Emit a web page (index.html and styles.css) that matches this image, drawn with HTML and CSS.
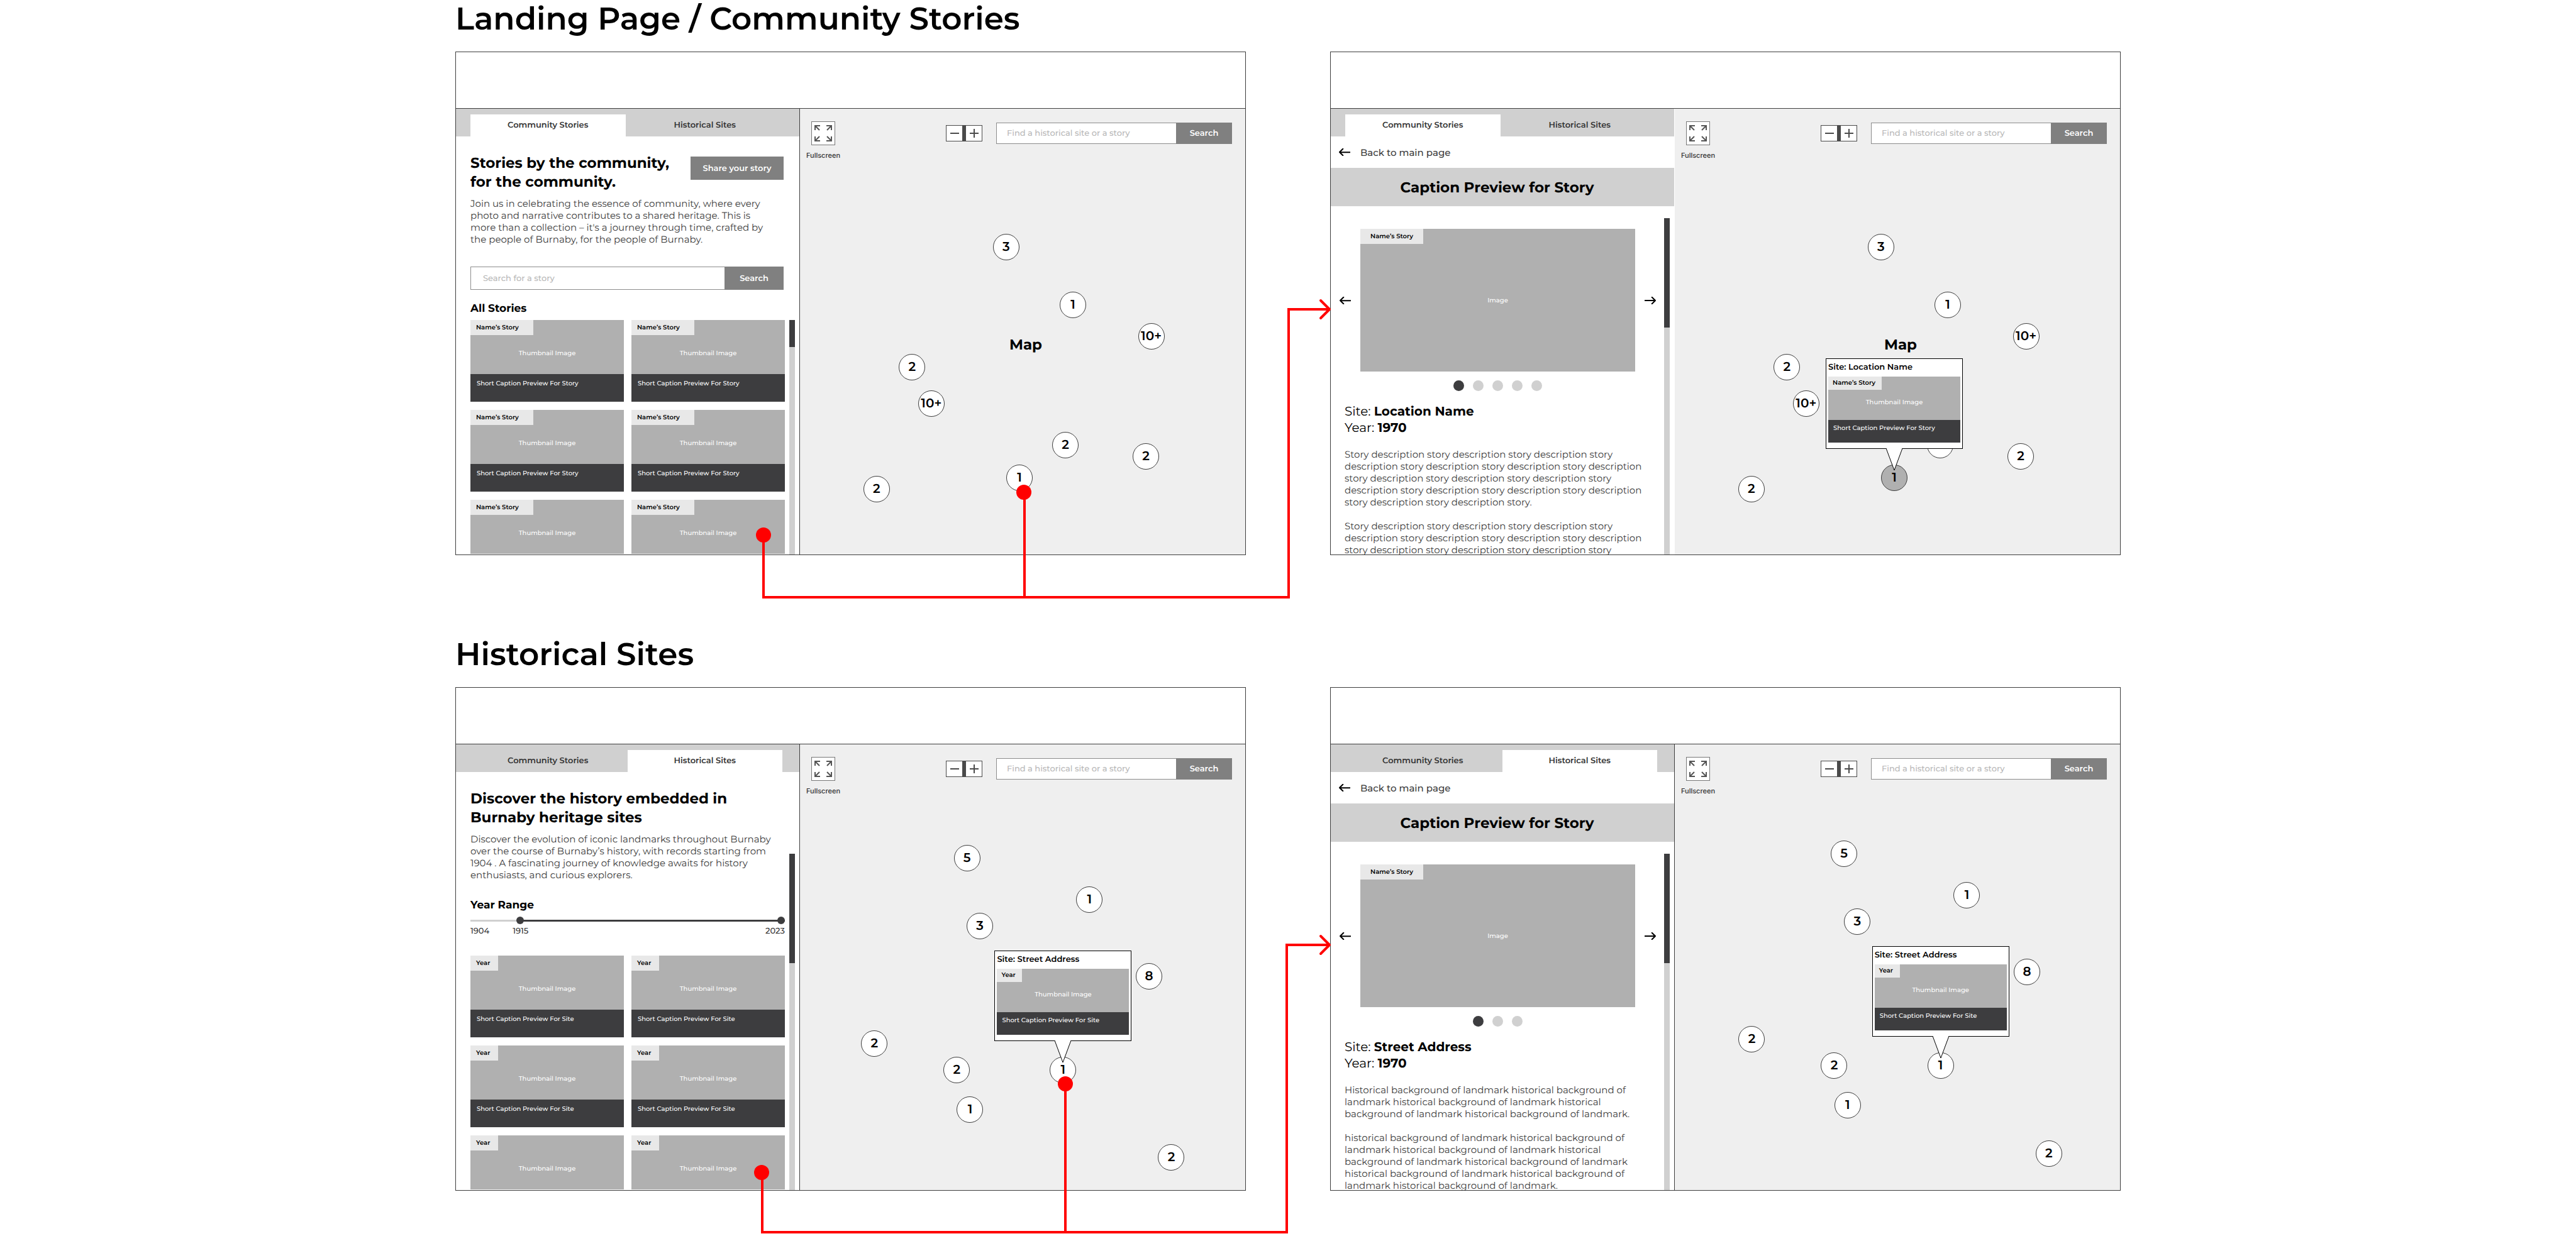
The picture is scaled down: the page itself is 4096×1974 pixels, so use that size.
FILE: index.html
```html
<!DOCTYPE html>
<html lang="en">
<head>
<meta charset="utf-8">
<meta name="viewport" content="width=device-width, initial-scale=1">
<title>Burnaby Heritage – Wireframes</title>
<link rel="stylesheet" href="styles.css">
</head>
<body>
<svg class="symbols" aria-hidden="true">
  <symbol id="arrow-left" viewBox="0 0 18 12"><path d="M17.500 6.200 L1 6 M6.300 0.800 L1 6 L6.300 11.200"/></symbol>
  <symbol id="arrow-right" viewBox="0 0 18 12"><path d="M0.500 6 H17 M11.700 0.800 L17 6 L11.700 11.200"/></symbol>
  <symbol id="expand" viewBox="0 0 36 36"><path d="M5 13 V6 H13 M5.500 6.500 L12 13 M23 6 H31 V13 M30.500 6.500 L24 13 M5 23 V30 H13 M5.500 29.500 L12 23 M23 30 H31 V23 M30.500 29.500 L24 23"/></symbol>
</svg>
<main class="board">

  <section class="flow">
    <h1 class="flow-title">Landing Page / Community Stories</h1>
    <div class="screens">

      <article class="screen">
        <header class="screen-header"></header>
        <div class="screen-main">
          <div class="panel">
            <nav class="tabs">
              <button class="tab tab-active" type="button">Community Stories</button>
              <button class="tab" type="button">Historical Sites</button>
            </nav>
            <div class="panel-body">
              <div class="listing">
                <div class="intro">
                  <h2 class="heading">Stories by the community,<br>for the community.</h2>
                  <button class="button share" type="button">Share your story</button>
                </div>
                <p class="text">Join us in celebrating the essence of community, where every photo and narrative contributes to a shared heritage. This is more than a collection – it's a journey through time, crafted by the people of Burnaby, for the people of Burnaby.</p>
                <form class="search story-search">
                  <input class="search-input" type="search" placeholder="Search for a story" aria-label="Search for a story">
                  <button class="button" type="button">Search</button>
                </form>
                <h3 class="subheading">All Stories</h3>
                <ul class="cards story-cards">
                  <li class="card"><div class="thumb"><span class="badge">Name’s Story</span><span class="thumb-label">Thumbnail Image</span></div><p class="caption">Short Caption Preview For Story</p></li>
                  <li class="card"><div class="thumb"><span class="badge">Name’s Story</span><span class="thumb-label">Thumbnail Image</span></div><p class="caption">Short Caption Preview For Story</p></li>
                  <li class="card"><div class="thumb"><span class="badge">Name’s Story</span><span class="thumb-label">Thumbnail Image</span></div><p class="caption">Short Caption Preview For Story</p></li>
                  <li class="card"><div class="thumb"><span class="badge">Name’s Story</span><span class="thumb-label">Thumbnail Image</span></div><p class="caption">Short Caption Preview For Story</p></li>
                  <li class="card"><div class="thumb"><span class="badge">Name’s Story</span><span class="thumb-label">Thumbnail Image</span></div></li>
                  <li class="card"><div class="thumb"><span class="badge">Name’s Story</span><span class="thumb-label">Thumbnail Image</span></div></li>
                </ul>
              </div>
              <div class="scrollbar scrollbar-stories"><div class="scroll-thumb"></div></div>
            </div>
          </div>
          <div class="map">
            <div class="map-tools">
              <div class="fullscreen">
                <button class="fullscreen-button" type="button" aria-labelledby="fs-1"><svg class="icon-expand"><use href="#expand"/></svg></button>
                <span class="fullscreen-label" id="fs-1">Fullscreen</span>
              </div>
              <div class="zoom">
                <button class="zoom-button" type="button" aria-label="Zoom out"><svg class="icon-zoom" viewBox="0 0 14 14"><path d="M0 7 H14"/></svg></button>
                <button class="zoom-button" type="button" aria-label="Zoom in"><svg class="icon-zoom" viewBox="0 0 14 14"><path d="M0 7 H14 M7 0 V14"/></svg></button>
              </div>
              <form class="search map-search">
                <input class="search-input" type="search" placeholder="Find a historical site or a story" aria-label="Find a historical site or a story">
                <button class="button" type="button">Search</button>
              </form>
            </div>
            <p class="map-name" style="left:50.7%;top:52.9%">Map</p>
            <button class="pin" type="button" style="left:46.3%;top:31%">3</button>
            <button class="pin" type="button" style="left:61.3%;top:44%">1</button>
            <button class="pin" type="button" style="left:78.9%;top:51.1%">10+</button>
            <button class="pin" type="button" style="left:25.2%;top:58%">2</button>
            <button class="pin" type="button" style="left:29.5%;top:66.2%">10+</button>
            <button class="pin" type="button" style="left:59.6%;top:75.4%">2</button>
            <button class="pin" type="button" style="left:77.7%;top:78%">2</button>
            <button class="pin" type="button" style="left:49.3%;top:82.8%">1</button>
            <button class="pin" type="button" style="left:17.2%;top:85.3%">2</button>
          </div>
        </div>
      </article>

      <article class="screen screen-story">
        <header class="screen-header"></header>
        <div class="screen-main">
          <div class="panel">
            <nav class="tabs">
              <button class="tab tab-active" type="button">Community Stories</button>
              <button class="tab" type="button">Historical Sites</button>
            </nav>
            <a class="back" href="#"><svg class="icon-arrow"><use href="#arrow-left"/></svg>Back to main page</a>
            <h2 class="banner">Caption Preview for Story</h2>
            <div class="panel-body">
              <div class="detail">
                <div class="carousel">
                  <button class="arrow" type="button" aria-label="Previous image"><svg class="icon-arrow"><use href="#arrow-left"/></svg></button>
                  <div class="slide"><span class="badge">Name’s Story</span>Image</div>
                  <button class="arrow" type="button" aria-label="Next image"><svg class="icon-arrow"><use href="#arrow-right"/></svg></button>
                </div>
                <div class="dots"><i class="dot dot-active"></i><i class="dot"></i><i class="dot"></i><i class="dot"></i><i class="dot"></i></div>
                <div class="facts">
                  <p class="fact">Site: <strong>Location Name</strong></p>
                  <p class="fact">Year: <strong>1970</strong></p>
                </div>
                <div class="story">
                  <p class="text">Story description story description story description story description story description story description story description story description story description story description story description story description story description story description story description story description story.</p>
                  <p class="text">Story description story description story description story description story description story description story description story description story description story description story</p>
                </div>
              </div>
              <div class="scrollbar"><div class="scroll-thumb"></div></div>
            </div>
          </div>
          <div class="map">
            <div class="map-tools">
              <div class="fullscreen">
                <button class="fullscreen-button" type="button" aria-labelledby="fs-2"><svg class="icon-expand"><use href="#expand"/></svg></button>
                <span class="fullscreen-label" id="fs-2">Fullscreen</span>
              </div>
              <div class="zoom">
                <button class="zoom-button" type="button" aria-label="Zoom out"><svg class="icon-zoom" viewBox="0 0 14 14"><path d="M0 7 H14"/></svg></button>
                <button class="zoom-button" type="button" aria-label="Zoom in"><svg class="icon-zoom" viewBox="0 0 14 14"><path d="M0 7 H14 M7 0 V14"/></svg></button>
              </div>
              <form class="search map-search">
                <input class="search-input" type="search" placeholder="Find a historical site or a story" aria-label="Find a historical site or a story">
                <button class="button" type="button">Search</button>
              </form>
            </div>
            <p class="map-name" style="left:50.7%;top:52.9%">Map</p>
            <button class="pin" type="button" style="left:46.3%;top:31%">3</button>
            <button class="pin" type="button" style="left:61.3%;top:44%">1</button>
            <button class="pin" type="button" style="left:78.9%;top:51.1%">10+</button>
            <button class="pin" type="button" style="left:25.2%;top:58%">2</button>
            <button class="pin" type="button" style="left:29.5%;top:66.2%">10+</button>
            <button class="pin" type="button" style="left:59.6%;top:75.4%">2</button>
            <button class="pin" type="button" style="left:77.7%;top:78%">2</button>
            <button class="pin pin-active" type="button" style="left:49.3%;top:82.8%">1</button>
            <button class="pin" type="button" style="left:17.2%;top:85.3%">2</button>
            <div class="popup" style="left:49.3%;top:82.8%">
              <h3 class="popup-title">Site: Location Name</h3>
              <div class="card card-small"><div class="thumb"><span class="badge">Name’s Story</span><span class="thumb-label">Thumbnail Image</span></div><p class="caption">Short Caption Preview For Story</p></div>
              <svg class="popup-tail" viewBox="0 0 28 36"><path d="M1 0 L14 35 L27 0"/></svg>
            </div>
          </div>
        </div>
      </article>
    </div>
    <svg class="connector" viewBox="0 0 2648 963" preserveAspectRatio="none" aria-hidden="true">
      <path d="M490 851 V950 H1325 V492 H1390 M905 783 V950"/>
      <path class="connector-head" d="M1376 478 L1390 492 L1376 506"/>
      <circle cx="490" cy="851" r="12"/>
      <circle cx="904" cy="783" r="12"/>
    </svg>
  </section>

  <section class="flow">
    <h1 class="flow-title">Historical Sites</h1>
    <div class="screens">

      <article class="screen">
        <header class="screen-header"></header>
        <div class="screen-main">
          <div class="panel">
            <nav class="tabs">
              <button class="tab" type="button">Community Stories</button>
              <button class="tab tab-active" type="button">Historical Sites</button>
            </nav>
            <div class="panel-body">
              <div class="listing">
                <h2 class="heading">Discover the history embedded in<br>Burnaby heritage sites</h2>
                <p class="text">Discover the evolution of iconic landmarks throughout Burnaby over the course of Burnaby’s history, with records starting from 1904 . A fascinating journey of knowledge awaits for history enthusiasts, and curious explorers.</p>
                <fieldset class="years">
                  <legend class="subheading">Year Range</legend>
                  <div class="range">
                    <input class="range-input" type="range" min="0" max="100" value="15" aria-label="First year" aria-valuetext="1915">
                    <input class="range-input" type="range" min="0" max="100" value="100" aria-label="Last year" aria-valuetext="2023">
                  </div>
                  <div class="range-labels"><span>1904</span><span>1915</span><span class="range-end">2023</span></div>
                </fieldset>
                <ul class="cards site-cards">
                  <li class="card"><div class="thumb"><span class="badge badge-year">Year</span><span class="thumb-label">Thumbnail Image</span></div><p class="caption">Short Caption Preview For Site</p></li>
                  <li class="card"><div class="thumb"><span class="badge badge-year">Year</span><span class="thumb-label">Thumbnail Image</span></div><p class="caption">Short Caption Preview For Site</p></li>
                  <li class="card"><div class="thumb"><span class="badge badge-year">Year</span><span class="thumb-label">Thumbnail Image</span></div><p class="caption">Short Caption Preview For Site</p></li>
                  <li class="card"><div class="thumb"><span class="badge badge-year">Year</span><span class="thumb-label">Thumbnail Image</span></div><p class="caption">Short Caption Preview For Site</p></li>
                  <li class="card"><div class="thumb"><span class="badge badge-year">Year</span><span class="thumb-label">Thumbnail Image</span></div></li>
                  <li class="card"><div class="thumb"><span class="badge badge-year">Year</span><span class="thumb-label">Thumbnail Image</span></div></li>
                </ul>
              </div>
              <div class="scrollbar scrollbar-sites"><div class="scroll-thumb"></div></div>
            </div>
          </div>
          <div class="map">
            <div class="map-tools">
              <div class="fullscreen">
                <button class="fullscreen-button" type="button" aria-labelledby="fs-3"><svg class="icon-expand"><use href="#expand"/></svg></button>
                <span class="fullscreen-label" id="fs-3">Fullscreen</span>
              </div>
              <div class="zoom">
                <button class="zoom-button" type="button" aria-label="Zoom out"><svg class="icon-zoom" viewBox="0 0 14 14"><path d="M0 7 H14"/></svg></button>
                <button class="zoom-button" type="button" aria-label="Zoom in"><svg class="icon-zoom" viewBox="0 0 14 14"><path d="M0 7 H14 M7 0 V14"/></svg></button>
              </div>
              <form class="search map-search">
                <input class="search-input" type="search" placeholder="Find a historical site or a story" aria-label="Find a historical site or a story">
                <button class="button" type="button">Search</button>
              </form>
            </div>
            <button class="pin" type="button" style="left:37.5%;top:25.5%">5</button>
            <button class="pin" type="button" style="left:65%;top:34.9%">1</button>
            <button class="pin" type="button" style="left:40.4%;top:40.7%">3</button>
            <button class="pin" type="button" style="left:78.4%;top:52%">8</button>
            <button class="pin" type="button" style="left:16.7%;top:67.1%">2</button>
            <button class="pin" type="button" style="left:35.2%;top:73.1%">2</button>
            <button class="pin" type="button" style="left:38.2%;top:81.9%">1</button>
            <button class="pin" type="button" style="left:59.1%;top:73.1%">1</button>
            <button class="pin" type="button" style="left:83.4%;top:92.7%">2</button>
            <div class="popup" style="left:59.1%;top:73.1%">
              <h3 class="popup-title">Site: Street Address</h3>
              <div class="card card-small"><div class="thumb"><span class="badge badge-year">Year</span><span class="thumb-label">Thumbnail Image</span></div><p class="caption">Short Caption Preview For Site</p></div>
              <svg class="popup-tail" viewBox="0 0 28 36"><path d="M1 0 L14 35 L27 0"/></svg>
            </div>
          </div>
        </div>
      </article>

      <article class="screen">
        <header class="screen-header"></header>
        <div class="screen-main">
          <div class="panel">
            <nav class="tabs">
              <button class="tab" type="button">Community Stories</button>
              <button class="tab tab-active" type="button">Historical Sites</button>
            </nav>
            <a class="back" href="#"><svg class="icon-arrow"><use href="#arrow-left"/></svg>Back to main page</a>
            <h2 class="banner">Caption Preview for Story</h2>
            <div class="panel-body">
              <div class="detail">
                <div class="carousel">
                  <button class="arrow" type="button" aria-label="Previous image"><svg class="icon-arrow"><use href="#arrow-left"/></svg></button>
                  <div class="slide"><span class="badge">Name’s Story</span>Image</div>
                  <button class="arrow" type="button" aria-label="Next image"><svg class="icon-arrow"><use href="#arrow-right"/></svg></button>
                </div>
                <div class="dots"><i class="dot dot-active"></i><i class="dot"></i><i class="dot"></i></div>
                <div class="facts">
                  <p class="fact">Site: <strong>Street Address</strong></p>
                  <p class="fact">Year: <strong>1970</strong></p>
                </div>
                <div class="story">
                  <p class="text">Historical background of landmark historical background of landmark historical background of landmark historical background of landmark historical background of landmark.</p>
                  <p class="text">historical background of landmark historical background of landmark historical background of landmark historical background of landmark historical background of landmark historical background of landmark historical background of landmark historical background of landmark.</p>
                </div>
              </div>
              <div class="scrollbar"><div class="scroll-thumb"></div></div>
            </div>
          </div>
          <div class="map">
            <div class="map-tools">
              <div class="fullscreen">
                <button class="fullscreen-button" type="button" aria-labelledby="fs-4"><svg class="icon-expand"><use href="#expand"/></svg></button>
                <span class="fullscreen-label" id="fs-4">Fullscreen</span>
              </div>
              <div class="zoom">
                <button class="zoom-button" type="button" aria-label="Zoom out"><svg class="icon-zoom" viewBox="0 0 14 14"><path d="M0 7 H14"/></svg></button>
                <button class="zoom-button" type="button" aria-label="Zoom in"><svg class="icon-zoom" viewBox="0 0 14 14"><path d="M0 7 H14 M7 0 V14"/></svg></button>
              </div>
              <form class="search map-search">
                <input class="search-input" type="search" placeholder="Find a historical site or a story" aria-label="Find a historical site or a story">
                <button class="button" type="button">Search</button>
              </form>
            </div>
            <button class="pin" type="button" style="left:38%;top:24.5%">5</button>
            <button class="pin" type="button" style="left:65.6%;top:33.9%">1</button>
            <button class="pin" type="button" style="left:41%;top:39.8%">3</button>
            <button class="pin" type="button" style="left:79.1%;top:51.1%">8</button>
            <button class="pin" type="button" style="left:17.3%;top:66.2%">2</button>
            <button class="pin" type="button" style="left:35.8%;top:72.1%">2</button>
            <button class="pin" type="button" style="left:38.8%;top:80.9%">1</button>
            <button class="pin" type="button" style="left:59.7%;top:72.1%">1</button>
            <button class="pin" type="button" style="left:84%;top:91.8%">2</button>
            <div class="popup" style="left:59.7%;top:72.1%">
              <h3 class="popup-title">Site: Street Address</h3>
              <div class="card card-small"><div class="thumb"><span class="badge badge-year">Year</span><span class="thumb-label">Thumbnail Image</span></div><p class="caption">Short Caption Preview For Site</p></div>
              <svg class="popup-tail" viewBox="0 0 28 36"><path d="M1 0 L14 35 L27 0"/></svg>
            </div>
          </div>
        </div>
      </article>
    </div>
    <svg class="connector" viewBox="0 0 2648 963" preserveAspectRatio="none" aria-hidden="true">
      <path d="M488 854 V949 H1322 V492 H1390 M970 713 V949"/>
      <path class="connector-head" d="M1376 478 L1390 492 L1376 506"/>
      <circle cx="487" cy="854" r="12"/>
      <circle cx="970" cy="713" r="12"/>
    </svg>
  </section>
</main>
</body>
</html>
```
FILE: styles.css
```css
:root {
  --line: #3d3d3d;
  --dark: #3d3d3f;
  --button: #808080;
  --thumb: #b0b0b0;
  --bar: #d0d0d0;
  --badge: #e8e8e8;
  --map: #efefef;
  --flow: #ff0000;
}

*, *::before, *::after { box-sizing: border-box; }

body {
  margin: 0;
  background: #fff;
  color: #000;
  font-family: Montserrat, Inter, "Open Sans", sans-serif;
  font-size: 15px;
  line-height: 19px;
  text-rendering: geometricPrecision;
}

h1, h2, h3, p, ul, fieldset { margin: 0; padding: 0; border: 0; }
ul { list-style: none; }
legend { padding: 0; }
button, input { margin: 0; padding: 0; border: 0; border-radius: 0; font: inherit; color: inherit; text-rendering: inherit; }
svg { display: block; fill: none; }
.symbols { display: none; }

.board {
  display: flex;
  flex-direction: column;
  gap: 48px;
  padding: 0 724px;
}

/* One flow: a title, two screens and the connector over them */
.flow { position: relative; padding-bottom: 80px; }
.flow-title {
  margin-bottom: 22px;
  font-size: 50px;
  font-weight: 600;
  line-height: 60px;
}
.screens {
  display: grid;
  grid-template-columns: repeat(2, minmax(0, 1fr));
  gap: 134px;
}
.connector {
  position: absolute;
  inset: 0;
  width: 100%;
  height: 100%;
  stroke: var(--flow);
  stroke-width: 4;
  pointer-events: none;
}
.connector circle { fill: var(--flow); stroke: none; }
.connector-head { stroke-linecap: round; stroke-linejoin: round; }

/* Screen */
.screen {
  display: flex;
  flex-direction: column;
  height: 801px;
  border: 1px solid var(--line);
  background: #fff;
}
.screen-header { flex: 0 0 90px; border-bottom: 1px solid var(--line); }
.screen-main {
  flex: 1;
  min-height: 0;
  display: grid;
  grid-template-columns: minmax(0, 547fr) minmax(0, 708fr);
}

/* Side panel */
.panel {
  display: flex;
  flex-direction: column;
  min-height: 0;
  overflow: hidden;
  border-right: 1px solid var(--line);
}
.screen-story .panel { border-right-color: #fff; box-shadow: 0 -1px 0 var(--line); }
.tabs {
  flex: none;
  display: flex;
  gap: 3px;
  padding: 9px 27px 0 23px;
  background: var(--bar);
}
.tab {
  flex: 1;
  height: 35px;
  background: none;
  color: #333;
  font-size: 13px;
  font-weight: 600;
}
.tab-active { background: #fff; }
.panel-body {
  flex: 1;
  min-height: 0;
  display: grid;
  grid-template-columns: minmax(0, 1fr) 9px;
  grid-template-rows: minmax(0, 1fr);
  gap: 7px;
  padding-right: 7px;
}
.scrollbar { margin-top: 19px; background: var(--bar); }
.scroll-thumb { height: 174px; background: var(--dark); }
.scrollbar-stories { margin-top: 292px; }
.scrollbar-stories .scroll-thumb { height: 43px; }
.scrollbar-sites { margin-top: 130px; }

/* Listing */
.listing { padding: 27px 0 0 23px; overflow: hidden; }
.intro {
  display: flex;
  justify-content: space-between;
  align-items: flex-start;
  padding-right: 2px;
}
.heading { font-size: 23px; font-weight: 700; line-height: 30px; }
.text { max-width: 480px; color: #3d3d3d; }
.listing .text { margin-top: 10px; }
.subheading { font-size: 17px; font-weight: 700; line-height: 20px; }
.button {
  flex: none;
  background: var(--button);
  color: #fff;
  font-size: 13px;
  font-weight: 600;
  line-height: 16px;
}
.share { width: 148px; height: 37px; margin-top: 5px; }
.search { display: flex; }
.search .button { width: 89px; }
.search-input {
  flex: 1;
  min-width: 0;
  height: 34px;
  padding: 0 16px;
  border: 1px solid #8c8c8c;
  border-right: 0;
  background: #fff;
  font-size: 13px;
  font-weight: 500;
  appearance: none;
}
.search-input::placeholder { color: #b8b8b8; opacity: 1; }
.story-search { margin: 34px 2px 20px 0; }
.story-search .search-input { height: 37px; padding: 0 19px; }
.story-search .button { width: 94px; }

.years { margin-top: 29px; }
.range {
  position: relative;
  height: 12px;
  margin-top: 8px;
  background:
    linear-gradient(var(--dark), var(--dark)) right / 84% 3px no-repeat,
    linear-gradient(var(--bar), var(--bar)) left / 100% 3px no-repeat;
}
.range-input {
  position: absolute;
  inset: 0;
  width: 100%;
  height: 12px;
  background: none;
  pointer-events: none;
  appearance: none;
}
.range-input::-webkit-slider-thumb {
  width: 12px;
  height: 12px;
  border-radius: 50%;
  background: var(--dark);
  pointer-events: auto;
  appearance: none;
}
.range-labels {
  display: flex;
  gap: 37px;
  margin-top: 3px;
  color: #333;
  font-size: 13px;
  font-weight: 500;
  line-height: 16px;
}
.range-end { margin-left: auto; }

/* Cards */
.cards { display: grid; grid-template-columns: repeat(2, minmax(0, 1fr)); gap: 13px 12px; }
.story-cards { margin-top: 8px; }
.site-cards { margin-top: 31px; }
.card { font-size: 10px; font-weight: 500; line-height: 12px; }
.thumb {
  display: flex;
  flex-direction: column;
  align-items: center;
  gap: 23px;
  height: 86px;
  background: var(--thumb);
  color: #fff;
}
.badge {
  align-self: flex-start;
  width: 100px;
  padding: 6px 9px;
  background: var(--badge);
  color: #000;
  font-weight: 600;
}
.badge-year { width: 44px; }
.caption {
  height: 44px;
  padding: 9px 10px;
  background: var(--dark);
  color: #fff;
}

/* Story and site detail */
.back {
  flex: none;
  display: flex;
  align-items: center;
  gap: 16px;
  height: 50px;
  padding-left: 13px;
  color: #3d3d3d;
  font-weight: 500;
  text-decoration: none;
}
.icon-arrow { width: 18px; height: 12px; stroke: #000; stroke-width: 2; stroke-linecap: round; }
.banner {
  flex: none;
  padding: 16px 17px 15px 0;
  background: var(--bar);
  font-size: 23px;
  font-weight: 700;
  line-height: 30px;
  text-align: center;
}
.detail { padding: 36px 6px 0 14px; overflow: hidden; }
.carousel { display: flex; align-items: center; gap: 15px; }
.arrow { flex: none; width: 18px; height: 24px; background: none; }
.slide {
  position: relative;
  flex: 1;
  display: grid;
  place-items: center;
  height: 227px;
  background: var(--thumb);
  color: #fff;
  font-size: 10px;
  font-weight: 500;
  line-height: 12px;
}
.slide .badge {
  position: absolute;
  top: 0;
  left: 0;
  text-align: center;
}
.dots { display: flex; justify-content: center; gap: 14px; margin-top: 14px; }
.dot { width: 17px; height: 17px; border-radius: 50%; background: var(--bar); }
.dot-active { background: var(--dark); }
.facts { margin-top: 20px; padding-left: 8px; font-size: 20px; line-height: 26px; }
.story { display: grid; gap: 19px; margin-top: 19px; padding-left: 8px; }

/* Map */
.map { position: relative; background: var(--map); }
.map-tools {
  display: flex;
  align-items: flex-start;
  padding: 20px 21px 0 8px;
}
.fullscreen {
  display: flex;
  flex-direction: column;
  align-items: center;
  gap: 9px;
  width: 58px;
  margin-right: auto;
}
.fullscreen-button { width: 38px; height: 38px; border: 1px solid #777; background: #fff; }
.icon-expand { width: 36px; height: 36px; stroke: #555; stroke-width: 2; }
.fullscreen-label {
  color: #333;
  font-family: Inter, sans-serif;
  font-size: 11px;
  font-weight: 500;
  line-height: 14px;
}
.zoom { display: flex; gap: 4px; margin: 6px 22px 0 0; background: #4a4a4a; }
.zoom-button {
  display: grid;
  place-items: center;
  width: 27px;
  height: 26px;
  border: 1px solid #4a4a4a;
  background: #fff;
}
.icon-zoom { width: 14px; height: 14px; stroke: #4a4a4a; stroke-width: 2; }
.map-search { flex: 0 1 375px; margin-top: 2px; }

.map-name, .pin { position: absolute; transform: translate(-50%, -50%); }
.map-name { font-size: 23px; font-weight: 700; line-height: 30px; }
.pin {
  display: grid;
  place-items: center;
  width: 42px;
  height: 42px;
  border: 1px solid var(--line);
  border-radius: 50%;
  background: #fff;
  color: #000;
  font-size: 20px;
  font-weight: 600;
  line-height: 26px;
}
.pin-active { background: var(--thumb); }

.popup {
  position: absolute;
  width: 218px;
  height: 144px;
  margin-top: -46px;
  padding: 5px 3px;
  border: 1px solid #000;
  background: #fff;
  transform: translate(-50%, -100%);
}
.popup-title { margin-bottom: 7px; font-size: 13px; font-weight: 600; line-height: 16px; }
.card-small .thumb { gap: 14px; height: 69px; }
.card-small .badge { width: 85px; height: 21px; padding: 4px 7px; }
.card-small .badge-year { width: 40px; }
.card-small .caption { height: 36px; padding: 7px 8px; }
.popup-tail {
  position: absolute;
  top: 100%;
  left: 50%;
  width: 28px;
  height: 36px;
  margin-left: -14px;
  fill: #fff;
  stroke: #000;
}

@media (max-width: 3200px) {
  .board { padding: 0 48px; }
}
@media (max-width: 2000px) {
  .screens { grid-template-columns: minmax(0, 1fr); gap: 48px; }
  .connector { display: none; }
}
```
